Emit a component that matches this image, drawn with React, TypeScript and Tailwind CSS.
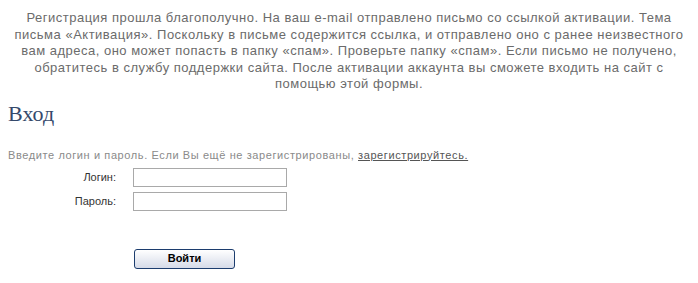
import React from 'react';

const App: React.FC = () => {
  return (
    <div className="w-[698px] h-[283px] bg-white font-['Liberation_Sans',Arial,sans-serif] overflow-hidden">
      <p className="pt-[10px] text-center text-[13px] leading-[16.5px] tracking-[0.5px] text-[#6b6b6b]">
        Регистрация прошла благополучно. На ваш e-mail отправлено письмо со ссылкой активации. Тема
        <br />
        письма «Активация». Поскольку в письме содержится ссылка, и отправлено оно с ранее неизвестного
        <br />
        вам адреса, оно может попасть в папку «спам». Проверьте папку «спам». Если письмо не получено,
        <br />
        обратитесь в службу поддержки сайта. После активации аккаунта вы сможете входить на сайт с
        <br />
        помощью этой формы.
      </p>

      <h1 className="mt-[8px] pl-2 font-['Liberation_Serif','Times_New_Roman',serif] text-[22px] leading-[26px] text-[#34496b]">
        Вход
      </h1>

      <p className="mt-[21px] pl-2 text-[11px] leading-[14px] tracking-[0.6px] whitespace-nowrap text-[#8a8a8a]">
        Введите логин и пароль. Если Вы ещё не зарегистрированы,{' '}
        <a href="#" className="text-[#555] underline">зарегистрируйтесь.</a>
      </p>

      <div className="mt-[6px] grid grid-cols-[125px_154px] gap-x-[8px] gap-y-[5px] items-start">
        <label className="text-right text-[11px] leading-[14px] text-[#333] pt-[2px] pr-[9px]">Логин:</label>
        <input className="h-[19px] w-[154px] border border-[#a9a9a9] bg-white outline-none" />
        <label className="text-right text-[11px] leading-[14px] text-[#333] pt-[2px] pr-[9px]">Пароль:</label>
        <input type="password" className="h-[19px] w-[154px] border border-[#a9a9a9] bg-white outline-none" />
      </div>

      <div className="mt-[38px] flex pl-[134px]">
        <button className="w-[101px] h-[20px] rounded-[3px] border border-[#1c3d6e] bg-gradient-to-b from-white to-[#d6dbe8] text-[11px] font-bold text-black leading-none">
          Войти
        </button>
      </div>
    </div>
  );
};

export default App;
